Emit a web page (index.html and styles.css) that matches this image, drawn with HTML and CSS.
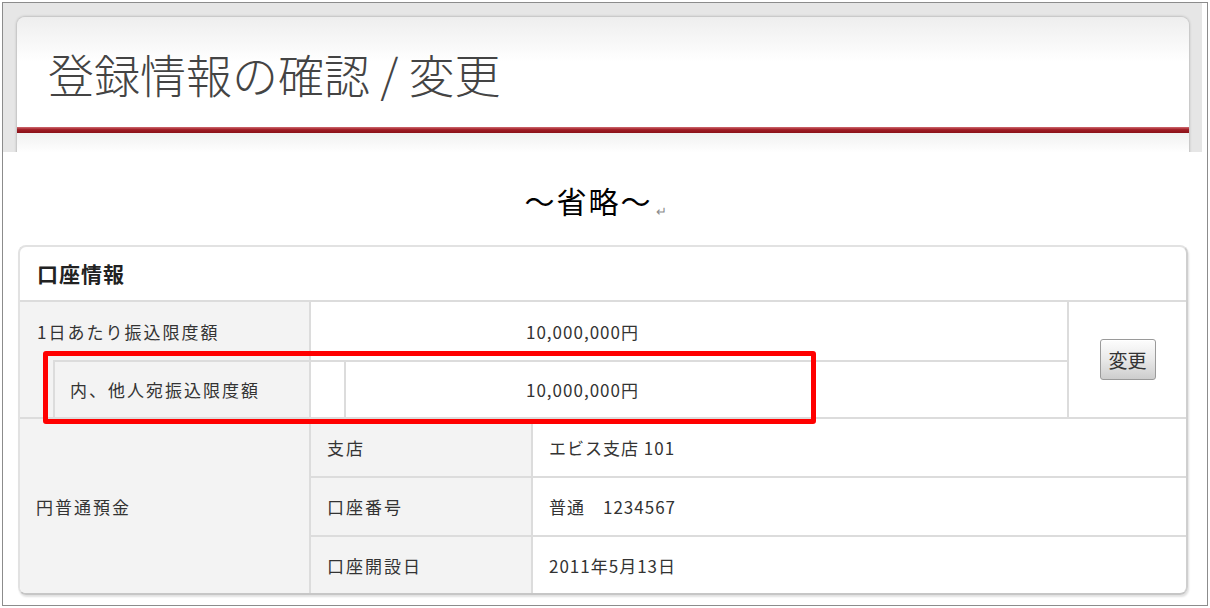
FILE: index.html
```html
<html>
<head>
    <meta charset="utf-8">
    <link rel="stylesheet" href="styles.css">
</head>
<body>
    <div class="frame">
        <div class="shot">
            <div class="pageHead">
                <h1 class="pageTitle">登録情報の確認 / 変更</h1>
                <div class="pageRule"></div>
                <div class="pageBody"></div>
            </div>
        </div>

        <div class="omit">～省略～<span class="mark">↵</span></div>

        <div class="card">
            <div class="cardHead">口座情報</div>

            <div class="limit">
                <div class="limitLabel">
                    <div class="limitMain">1日あたり振込限度額</div>
                    <div class="limitSub">内、他人宛振込限度額</div>
                </div>
                <div class="limitValue">
                    <div class="limitRow">10,000,000円</div>
                    <div class="limitRow sub">
                        <div class="limitBox">10,000,000円</div>
                    </div>
                </div>
                <div class="limitAction">
                    <button class="changeButton" type="button">変更</button>
                </div>
            </div>

            <div class="deposit">
                <div class="depositLabel">円普通預金</div>
                <div class="depositKey">支店</div>
                <div class="depositVal">エビス支店 101</div>
                <div class="depositKey">口座番号</div>
                <div class="depositVal">普通　1234567</div>
                <div class="depositKey last">口座開設日</div>
                <div class="depositVal last">2011年5月13日</div>
            </div>
        </div>

        <div class="highlight"></div>
    </div>
</body>
</html>
```

FILE: styles.css
```css
* {
    box-sizing: border-box;
}

body {
    margin: 0;
    background: #ffffff;
    font-family: "Noto Sans CJK JP", sans-serif;
    color: #333333;
}

.frame {
    position: relative;
    margin: 2px 0 0 2px;
    width: 1206px;
    height: 604px;
    border: 1px solid #8c8c8c;
    overflow: hidden;
}

/* top: screenshot of the page header */
.shot {
    width: 1199px;
    height: 149px;
    padding: 14px 0 0 14px;
    background: #e6e6e6;
    overflow: hidden;
}

.pageHead {
    width: 1172px;
    height: 170px;
    border-radius: 8px 8px 0 0;
    background: linear-gradient(#eeeeee, #ffffff 45px);
    box-shadow: 0 0 3px rgba(0, 0, 0, 0.35);
}

.pageTitle {
    margin: 0;
    height: 110px;
    padding: 33px 0 0 31px;
    font-size: 46px;
    line-height: 46px;
    font-weight: 300;
    color: #444444;
}

.pageRule {
    height: 6px;
    background: linear-gradient(#cf6a70, #a01c24 45%, #8a1118);
}

.pageBody {
    height: 54px;
    background: linear-gradient(#f1f1f1, #ffffff 20px);
}

/* omitted part */
.omit {
    height: 93px;
    padding: 28px 19px 0 0;
    text-align: center;
    font-size: 30px;
    line-height: 40px;
    letter-spacing: 2px;
    color: #000000;
}

.mark {
    margin-left: 3px;
    font-size: 13px;
    letter-spacing: 0;
    color: #8a8a8a;
    vertical-align: -3px;
}

/* account card */
.card {
    margin-left: 15px;
    width: 1170px;
    height: 350px;
    border: 2px solid #e2e2e2;
    border-right-color: #cfcfcf;
    border-bottom-color: #c6c6c6;
    border-radius: 8px;
    box-shadow: 1px 2px 2px rgba(0, 0, 0, 0.12);
    overflow: hidden;
}

.cardHead {
    height: 55px;
    padding-left: 17px;
    border-bottom: 2px solid #dcdcdc;
    font-size: 21px;
    line-height: 53px;
    font-weight: 700;
    letter-spacing: 1px;
    color: #222222;
}

.limit {
    display: grid;
    grid-template-columns: 291px 758px 1fr;
    border-bottom: 2px solid #dcdcdc;
    font-size: 17px;
}

.limitLabel {
    background: #f3f3f3;
    border-right: 2px solid #dcdcdc;
    letter-spacing: 2px;
}

.limitMain {
    display: flex;
    align-items: center;
    height: 58px;
    padding-left: 17px;
}

.limitSub {
    display: flex;
    align-items: center;
    height: 57px;
    margin-left: 33px;
    padding-left: 15px;
    border-top: 2px solid #dcdcdc;
    border-left: 2px solid #dcdcdc;
}

.limitValue {
    border-right: 2px solid #dcdcdc;
    letter-spacing: 1px;
}

.limitRow {
    display: flex;
    align-items: center;
    height: 58px;
    padding-left: 215px;
}

.limitRow.sub {
    height: 57px;
    padding-left: 33px;
    border-top: 2px solid #dcdcdc;
}

.limitBox {
    display: flex;
    align-items: center;
    height: 55px;
    width: 100%;
    padding-left: 180px;
    border-left: 2px solid #dcdcdc;
}

.limitAction {
    display: flex;
    align-items: center;
    justify-content: center;
}

.changeButton {
    width: 56px;
    height: 41px;
    padding: 0;
    border: 1px solid #9a9a9a;
    border-radius: 3px;
    background: linear-gradient(#fdfdfd, #e9e9e9 50%, #cdcdcd);
    box-shadow: inset 0 1px 0 #ffffff;
    font-family: "Noto Sans CJK JP", sans-serif;
    font-size: 19px;
    color: #333333;
}

.deposit {
    display: grid;
    grid-template-columns: 291px 222px 1fr;
    grid-template-rows: 59px 59px 56px;
    font-size: 17px;
}

.depositLabel {
    grid-row: 1 / span 3;
    display: flex;
    align-items: center;
    padding-left: 16px;
    background: #f3f3f3;
    border-right: 2px solid #dcdcdc;
    letter-spacing: 2px;
}

.depositKey {
    display: flex;
    align-items: center;
    padding-left: 16px;
    background: #f3f3f3;
    border-right: 2px solid #dcdcdc;
    border-bottom: 2px solid #dcdcdc;
    letter-spacing: 2px;
}

.depositVal {
    display: flex;
    align-items: center;
    padding-left: 16px;
    border-bottom: 2px solid #dcdcdc;
    letter-spacing: 1px;
}

.depositKey.last,
.depositVal.last {
    border-bottom: none;
}

/* red annotation over the table */
.highlight {
    position: absolute;
    left: 40px;
    top: 348px;
    width: 773px;
    height: 73px;
    border: 5px solid #ff0000;
    border-radius: 3px;
}
```
